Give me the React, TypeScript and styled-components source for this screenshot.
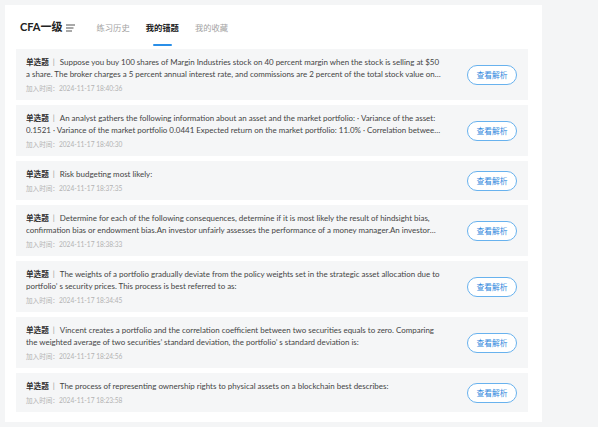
import styled, {createGlobalStyle} from "styled-components";

const GlobalStyle = createGlobalStyle`
    html, body {
        margin: 0;
        padding: 0;
        background: #f4f5f6;
    }
    body {
        font-family: Lato, "Noto Sans CJK SC", sans-serif;
    }
`

type WrongItem = {
    text: string
    time: string
};

const items: Array<WrongItem> = [
    {
        text: "Suppose you buy 100 shares of Margin Industries stock on 40 percent margin when the stock is selling at $50 a share. The broker charges a 5 percent annual interest rate, and commissions are 2 percent of the total stock value on both the purchase and sale.",
        time: "2024-11-17 18:40:36"
    },
    {
        text: "An analyst gathers the following information about an asset and the market portfolio: · Variance of the asset: 0.1521 · Variance of the market portfolio 0.0441 Expected return on the market portfolio: 11.0% · Correlation between the asset and the market portfolio: 0.8",
        time: "2024-11-17 18:40:30"
    },
    {
        text: "Risk budgeting most likely:",
        time: "2024-11-17 18:37:35"
    },
    {
        text: "Determine for each of the following consequences, determine if it is most likely the result of hindsight bias, confirmation bias or endowment bias.An investor unfairly assesses the performance of a money manager.An investor holds on to an asset.",
        time: "2024-11-17 18:38:33"
    },
    {
        text: "The weights of a portfolio gradually deviate from the policy weights set in the strategic asset allocation due to portfolio’ s security prices. This process is best referred to as:",
        time: "2024-11-17 18:34:45"
    },
    {
        text: "Vincent creates a portfolio and the correlation coefficient between two securities equals to zero. Comparing the weighted average of two securities’  standard deviation, the portfolio’ s standard deviation is:",
        time: "2024-11-17 18:24:56"
    },
    {
        text: "The process of representing ownership rights to physical assets on a blockchain best describes:",
        time: "2024-11-17 18:23:58"
    }
];

const tabs = ["练习历史", "我的错题", "我的收藏"];

export default function App() {
    return (
        <Page>
            <GlobalStyle/>
            <Panel>
                <Header>
                    <Title>CFA一级</Title>
                    <MenuIcon width="9" height="8" viewBox="0 0 9 8">
                        <rect x="0" y="0.5" width="9" height="1" fill="#555"/>
                        <rect x="0" y="3.5" width="7.5" height="1" fill="#555"/>
                        <rect x="0" y="6.5" width="6" height="1" fill="#555"/>
                    </MenuIcon>
                    <Tabs>
                        {tabs.map((tab, index) => (
                            <Tab key={tab} active={index === 1}>{tab}</Tab>
                        ))}
                    </Tabs>
                </Header>
                <List>
                    {items.map((item, index) => (
                        <Row key={index}>
                            <Body>
                                <Question>
                                    <Label>单选题</Label>
                                    <Divider>|</Divider>
                                    {item.text}
                                </Question>
                                <Time>加入时间：{item.time}</Time>
                            </Body>
                            <ViewButton>查看解析</ViewButton>
                        </Row>
                    ))}
                </List>
            </Panel>
        </Page>
    );
}

const Page = styled.div`
    width: 598px;
    height: 427px;
    padding: 5px;
    box-sizing: border-box;
    background: #f4f5f6;
`

const Panel = styled.section`
    width: 537px;
    height: 417px;
    background: #ffffff;
    padding: 0 14px 0 11px;
    box-sizing: border-box;
    overflow: hidden;
`

const Header = styled.div`
    display: flex;
    align-items: center;
    height: 44px;
    padding-left: 4px;
`

const Title = styled.span`
    font-size: 11px;
    font-weight: 700;
    color: #222;
    line-height: 14px;
`

const MenuIcon = styled.svg`
    margin-left: 3px;
    margin-top: 1px;
`

const Tabs = styled.div`
    display: flex;
    gap: 16px;
    margin-left: 22px;
    height: 100%;
`

const Tab = styled.span<{active?: boolean}>`
    position: relative;
    display: flex;
    align-items: center;
    font-family: "Noto Sans CJK SC", sans-serif;
    font-size: 8.3px;
    font-weight: ${({active}) => active ? 700 : 400};
    color: ${({active}) => active ? "#222" : "#a3a3a3"};

    &::after {
        content: "";
        display: ${({active}) => active ? "block" : "none"};
        position: absolute;
        left: 7px;
        right: 7px;
        bottom: 3px;
        height: 2px;
        border-radius: 1px;
        background: #2a8fe8;
    }
`

const List = styled.div`
    display: flex;
    flex-direction: column;
    gap: 5px;
`

const Row = styled.div`
    display: flex;
    align-items: center;
    justify-content: space-between;
    background: #f5f6f7;
    padding: 7px 11px 7px 10px;
`

const Body = styled.div`
    width: 415px;
`

const Question = styled.div`
    font-size: 7.95px;
    line-height: 12px;
    color: #444;
    display: -webkit-box;
    -webkit-line-clamp: 2;
    -webkit-box-orient: vertical;
    overflow: hidden;
`

const Label = styled.span`
    font-family: "Noto Sans CJK SC", sans-serif;
    font-size: 7.6px;
    font-weight: 700;
    color: #333;
`

const Divider = styled.span`
    color: #999;
    margin: 0 5px 0 4px;
`

const Time = styled.div`
    margin-top: 3px;
    font-size: 6.6px;
    line-height: 10px;
    color: #b3b3b3;
`

const ViewButton = styled.button`
    width: 50px;
    height: 20px;
    border: 1px solid #68b2ee;
    border-radius: 10px;
    background: #fff;
    color: #2f88dd;
    font-family: "Noto Sans CJK SC", sans-serif;
    font-size: 7.8px;
    padding: 0;
    cursor: pointer;
`
